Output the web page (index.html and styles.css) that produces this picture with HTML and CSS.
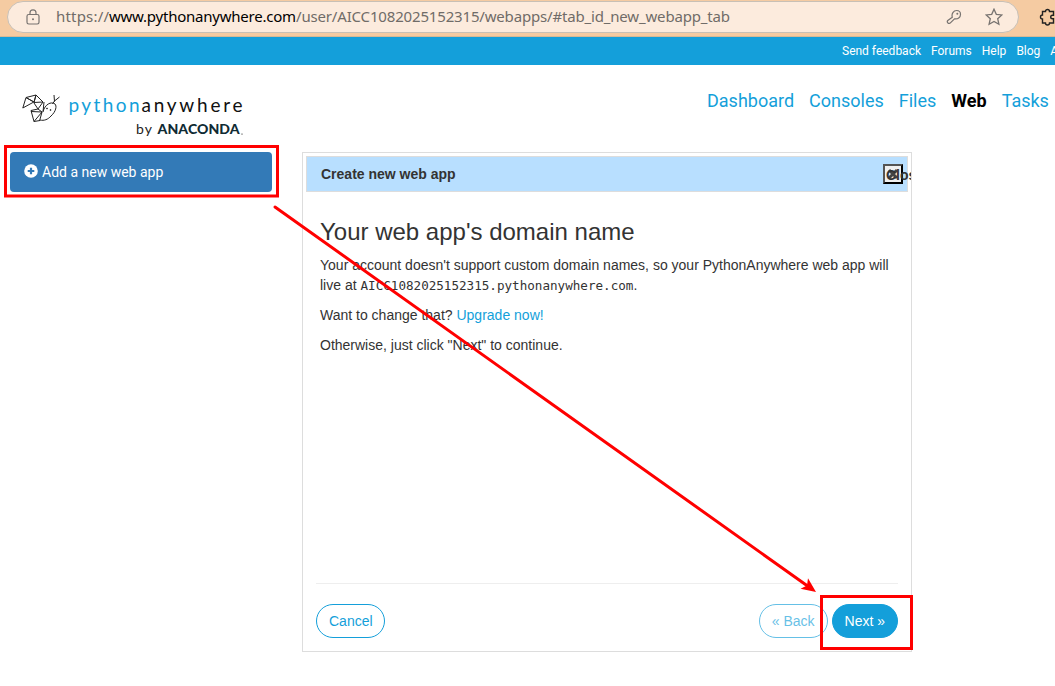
FILE: index.html
```html
<!DOCTYPE html>
<html lang="en">
<head>
<meta charset="utf-8">
<title>Web app setup : PythonAnywhere</title>
<link rel="stylesheet" href="styles.css">
</head>
<body>
<div class="browser-bar">
  <div class="address">
    <svg class="lock" width="14" height="16" viewBox="0 0 14 16"><rect x="1" y="5.5" width="12" height="9.5" rx="1.7"/><path d="M4 5.5V3.8a3 3 0 0 1 6 0v1.7"/><circle class="dot" cx="7" cy="10.2" r="1"/></svg>
    <svg class="url" width="676" height="24"><text x="0" y="17" textLength="53">https://</text><text class="host" x="53" y="17" textLength="187">www.pythonanywhere.com</text><text x="240" y="17" textLength="434">/user/AICC1082025152315/webapps/#tab_id_new_webapp_tab</text></svg>
    <svg class="key" width="16" height="16" viewBox="0 0 16 16"><path d="M6.3 8.2C5.3 4.8 7.4 1.5 10.6 1.5c2.3 0 3.9 1.7 3.9 3.9 0 3-2.700 5-6 4.400L4.400 13.800a1.700 1.700 0 0 1-2.600-2.300z"/><circle class="dot" cx="11.3" cy="4.7" r="1"/></svg>
    <svg class="star" width="18" height="18" viewBox="0 0 18 18"><path d="M9 1.2l2.300 5.100 5.500.6-4.100 3.800 1.200 5.500L9 13.400l-4.900 2.800 1.200-5.500-4.100-3.800 5.500-.6z"/></svg>
  </div>
  <svg class="extension" width="18" height="18" viewBox="0 0 18 18"><path d="M4.500 3.500h3a2 2 0 0 1 4 0h4v3.700h-1a1.800 1.800 0 0 0 0 3.600h1v4.200h-4a2 2 0 0 1-4 0h-3v-4a2 2 0 0 1 0-4z"/></svg>
</div>
<nav class="top-links"><a>Send feedback</a><a>Forums</a><a>Help</a><a>Blog</a><a>Account</a></nav>
<header class="header">
  <svg class="logo" width="226" height="50" viewBox="0 0 226 50">
    <g class="snake"><path d="M4 4.500l10-2.500-2 7zM4 4.500L.8 15l11-6zM14 2l7 7-9 .5zM12 10l4 6 5-7M16 16l-7 1.500 3 11 8-9.500zM9 18.500l11 .5-2.500 9M12 28.500l6-1M22 9l-1 10M21 18.500c2-7 8-10.500 12-7.500 2 2 1 7.500-4 12-3 3.500-7 5-11 4"/><path d="M32.500 8.500l-.5-6.500M32.500 8l5-4M30.500 11l2-3"/><circle cx="25" cy="15.500" r=".5"/><circle cx="28.500" cy="17" r=".5"/></g>
    <text class="brand blue" x="46.500" y="19" textLength="71">python</text>
    <text class="brand" x="119.500" y="19" textLength="101">anywhere</text>
    <text class="by" x="114" y="41" textLength="16">by</text>
    <text class="anaconda" x="135.500" y="41" textLength="82">ANACONDA</text><circle class="mark" cx="220" cy="41" r=".6"/>
  </svg>
  <nav class="main-links"><a>Dashboard</a><a>Consoles</a><a>Files</a><a class="active">Web</a><a>Tasks</a></nav>
</header>
<main class="main">
  <aside><button class="add-app"><svg width="14" height="14" viewBox="0 0 14 14"><circle cx="7" cy="7" r="6.8" fill="#fff"/><path d="M7 3.700v6.600M3.700 7h6.600" stroke="#337ab7" stroke-width="2.200"/></svg>Add a new web app</button></aside>
  <section class="dialog">
    <div class="titlebar"><span>Create new web app</span><button class="close"><svg width="12" height="12" viewBox="0 0 12 12"><path d="M2 2l8 8M10 2l-8 8"/></svg><span>Close</span></button></div>
    <div class="content">
      <h1>Your web app's domain name</h1>
      <p>Your account doesn't support custom domain names, so your PythonAnywhere web app will live at <span class="domain">AICC1082025152315.pythonanywhere.com</span>.</p>
      <p>Want to change that? <a>Upgrade now!</a></p>
      <p>Otherwise, just click "Next" to continue.</p>
    </div>
    <footer class="buttons"><button class="cancel">Cancel</button><button class="back">« Back</button><button class="next">Next »</button></footer>
  </section>
</main>
<svg class="annotations" width="1055" height="686" viewBox="0 0 1055 686"><rect x="5.500" y="146.500" width="272" height="49.500"/><rect x="821.500" y="596.500" width="90" height="52"/><path d="M275 207L809 587"/><path class="head" d="M816 592l-15.500-3.200 6.500-3.400 1-7.200z"/></svg>
</body>
</html>
```
FILE: styles.css
```css
* { box-sizing: border-box; }
body { margin: 0; width: 1055px; height: 686px; overflow: hidden; background: #fff; color: #333; font: 14px/20px "Liberation Sans", Arial, sans-serif; }
svg { flex: none; }
button { font: inherit; }
a { color: #149fda; }

.browser-bar { display: flex; height: 37px; padding: 1px 0 0 7px; background: #f5cba2; border-bottom: 1px solid #d8b995; overflow: hidden; }
.address { display: flex; align-items: center; width: 1012px; height: 32px; flex: none; padding-left: 18px; border: 1px solid #c8c0b6; border-radius: 16px; background: #fcebdd; }
.address svg, .extension { fill: none; stroke: #777370; stroke-width: 1.200; }
.address .dot { fill: #777370; stroke: none; }
.address .url { margin-left: 16px; fill: #706c68; stroke: none; font: 15px "Noto Sans", sans-serif; }
.address .url .host { fill: #000; }
.key { margin-left: 214px; }
.star { margin-left: 23px; }
.address .star { stroke-width: 1.300; }
.extension { margin: 7px 0 0 19px; stroke: #222; stroke-width: 1.400; }

.top-links { display: flex; gap: 10px; height: 28px; padding-left: 842px; background: #149fda; font: 12px/28px Roboto, sans-serif; white-space: nowrap; overflow: hidden; }
.top-links a { color: #fff; }

.header { display: flex; height: 87px; padding: 27px 0 0 22px; }
.logo { margin-top: 1px; }
.main-links { display: flex; gap: 15px; margin: -4px 0 0 459px; font: 18px/26px Roboto, sans-serif; }
.main-links .active { color: #000; font-weight: 700; }
.snake { fill: none; stroke: #222; stroke-width: 1; stroke-linejoin: round; }
.brand { fill: #111; font: 400 19px Lato, sans-serif; }
.blue { fill: #149fda; }
.by { fill: #222; font: 14px Lato, sans-serif; }
.anaconda { fill: #102b34; font: 900 14px Lato, sans-serif; }

.main { display: flex; padding-left: 10px; }
aside { width: 292px; }
.add-app { display: flex; align-items: center; gap: 4px; width: 262px; height: 40px; padding: 0 14px; border: 0; border-radius: 4px; background: #337ab7; color: #fff; font: 14px/20px Roboto, sans-serif; }
.add-app svg { margin-top: -2px; }
.dialog { display: flex; flex-direction: column; width: 610px; height: 500px; padding: 3px; border: 1px solid #ddd; overflow: hidden; }
.titlebar { display: flex; justify-content: space-between; align-items: center; height: 36px; flex: none; padding: 0 4px 0 14px; border: 1px solid #ddd; background: #b8dfff; font-weight: 700; }
.close { position: relative; width: 20px; height: 20px; padding: 2px; border: 2px outset #000; background: #f0f0f0; color: #333; }
.close svg { display: block; stroke: #444; stroke-width: 3; }
.close span { position: absolute; top: -1px; left: 1px; line-height: 20px; }
.content { flex: 1; padding: 26px 14px 0; }
h1 { margin: 0 0 9px; font-size: 24px; line-height: 28px; font-weight: 500; }
p { margin: 0 0 10px; }
.domain { font: 12.600px "DejaVu Sans Mono", monospace; }
.buttons { display: flex; height: 65px; margin: 0 10px; padding-top: 20px; border-top: 1px solid #eee; }
.buttons button { height: 34px; padding: 0 12px; border: 1px solid #149fda; border-radius: 17px; background: #fff; color: #149fda; }
.buttons .cancel { width: 69px; }
.buttons .back { margin-left: auto; opacity: .65; }
.buttons .next { margin-left: 4px; background: #149fda; color: #fff; }

.annotations { position: absolute; top: 0; left: 0; fill: none; stroke: #f00; stroke-width: 3; stroke-linecap: round; pointer-events: none; }
.annotations .head { fill: #f00; stroke: none; }
```
